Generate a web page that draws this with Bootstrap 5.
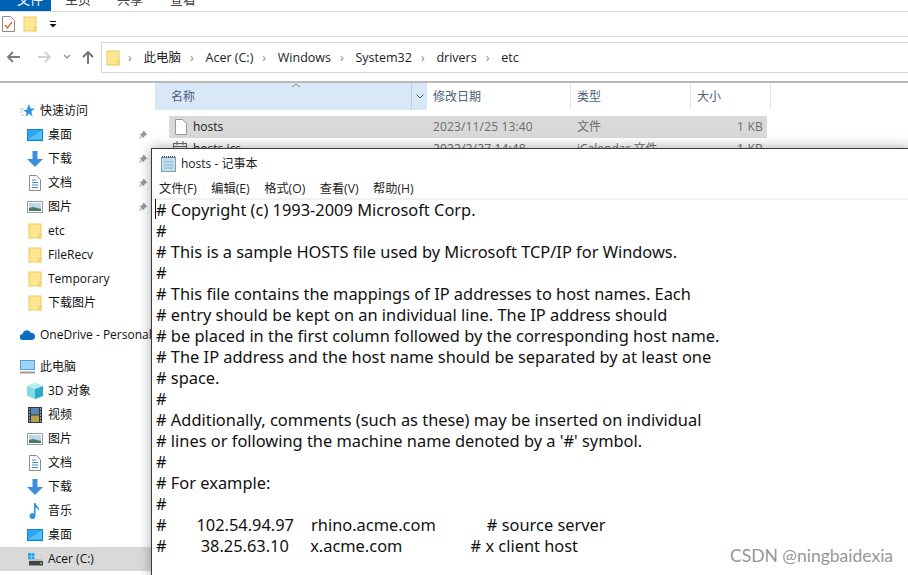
<!DOCTYPE html>
<html lang="zh"><head><meta charset="utf-8"><title>hosts - 记事本</title>
<link href="https://cdn.jsdelivr.net/npm/bootstrap@5.3.0/dist/css/bootstrap.min.css" rel="stylesheet">
<style>
html,body{margin:0;height:100%;overflow:hidden;background:#fff}
body{font:12px/16px "Open Sans","Noto Sans CJK SC",sans-serif;color:#1a1a1a}
.stage{width:908px;height:575px;overflow:hidden}
.ribbon{height:12px;border-bottom:1px solid #dcdcdc;overflow:hidden}
.ribtab{height:11px;overflow:hidden;color:#444;font-size:13px}
.ribtab span{display:block;margin-top:-9px}
.ribtab.on{width:51px;background:#0063b1;color:#fff;padding-left:17px}
.ribtab.t1{margin-left:14px;width:52px}.ribtab.t2{width:53px}.ribtab.t3{width:40px}
.qat{height:25px;border-bottom:1px solid #dcdcdc;padding-left:2px}
.qdrop{margin-left:12px}
.addr{height:46px;border-bottom:2px solid #b9b9b9}
.addrbox{margin-left:101px;height:31px;margin-top:5px;flex:1;border:1px solid #d9d9d9;border-right:0;color:#222;font-size:12.5px}
.crumb{margin-left:9.500px}.chev{color:#888;width:6px;margin-left:9px}
.chev.first{margin-left:8px}
.navic{position:relative}
.side{width:155px;flex:none;padding-top:16px;color:#111}
.srow{height:24px;padding-left:27px;gap:5px}
.srow.top{padding-left:20px;gap:5px}.srow.top svg{width:15px}
.srow .pin{margin-left:auto;margin-right:7px}
.srow.cur{background:#d9d9d9}
.gap8{margin-top:8px}
.hdr{height:27px;color:#4c607a}
.hname{width:272px;background:#d9e8f6;padding-left:16px;position:relative}
.hdrop{width:16px;border-left:1px solid #bfcfdf;margin-left:auto}
.hsort{left:136px;top:0}
.hcol{border-right:1px solid #e5e5e5;padding-left:6px;height:27px}
.wdate{width:144px}.wtype{width:120px}.wsize{width:80px}
.frows{margin:6px 0 0 14px;width:598px;color:#6d6d6d}
.frow{height:22px}
.frow.sel{background:#d9d9d9}
.cn{width:264px;padding-left:24px;color:#1a1a1a;position:relative}
.ficon{left:6px;top:0}.ficon2{left:4px;top:0}
.cd{width:144px;letter-spacing:.15px}.ct{width:117px}.cs{width:73px;text-align:right;padding-right:4px;letter-spacing:.2px}
.winpad{position:absolute;left:151px;top:148px;width:760px;height:430px;background:#fff;border:1px solid #3a3a3a;box-shadow:0 0 12px rgba(0,0,0,.35)}
.wintitle{height:30px;padding-left:9px;gap:5px;color:#222}
.winmenu{height:21px;padding:1px 0 0 7px;gap:14.500px;border-bottom:2px solid #f1f1f1;color:#222;font-size:12.2px}
.hostsText{margin:-1px 0 0 4px;font:16.4px/21px "Noto Sans","Open Sans",sans-serif;white-space:pre;color:#111;position:relative;overflow:visible}
.caret{position:absolute;left:-1px;top:0;width:1px;height:20px;background:#111}
.wmark{position:absolute;left:730px;top:546px;font:17.500px/20px Lato,sans-serif;color:#979797}
</style></head><body>
<svg width="0" height="0" class="position-absolute"><defs>
<symbol id="fld" viewBox="0 0 14 16"><rect x="1" y="1" width="12" height="14" fill="#ffe692" stroke="#eccb5b"/><rect x="11" y="11" width="2" height="4" fill="#ffe692" stroke="#e6c24f" stroke-width=".7"/></symbol>
<symbol id="desk" viewBox="0 0 16 12"><rect width="16" height="12" fill="#0a84d8"/><rect x="1" y="1" width="14" height="9.5" fill="#2ba6f5"/><path d="M1 10.5 15 1v9.5z" fill="#59bff9"/></symbol>
<symbol id="down" viewBox="0 0 16 16"><path d="M5.5 0h5v8H16l-8 8-8-8h5.500z" fill="#3e8ddd"/></symbol>
<symbol id="doc" viewBox="0 0 12 16"><path d="M.5.500h7l4 4v11H.5z" fill="#fff" stroke="#8b8b8b"/><path d="M3 5h4M3 7.500h6M3 10h6M3 12.500h6" stroke="#3f8fc7"/></symbol>
<symbol id="pic" viewBox="0 0 16 12"><rect x=".5" y=".5" width="15" height="11" fill="#fff" stroke="#9a9a9a"/><rect x="2" y="2" width="12" height="8" fill="#bcd7e8"/><path d="M2 10V7l4-1 8 2v2z" fill="#4c7a68"/></symbol>
<symbol id="pin" viewBox="0 0 10 10"><path d="M5.500.5 9.500 4.500 8 5 6 7 6 8.500 1.500 4 3 4 5 2z M3 6 .5 9.500 4 7z" fill="#9a9a9a"/></symbol>
<symbol id="cube" viewBox="0 0 16 16"><path d="M8 0l8 3v10l-8 3-8-3V3z" fill="#7fdbe4"/><path d="M8 6v10l8-3V3z" fill="#2fa8c4"/><path d="M8 0l8 3-8 3-8-3z" fill="#b6eef3"/></symbol>
<symbol id="vid" viewBox="0 0 14 16"><rect width="14" height="16" fill="#2c3a45"/><rect x="3" y="1" width="8" height="6.500" fill="#5b86b8"/><rect x="3" y="8.500" width="8" height="6.500" fill="#b9a24c"/><path d="M1 2h1M1 5h1M1 8h1M1 11h1M1 14h1M12 2h1M12 5h1M12 8h1M12 11h1M12 14h1" stroke="#fff"/></symbol>
<symbol id="note" viewBox="0 0 12 16"><path d="M5 0h1.500c.5 3 4.500 4 3.500 8-.5-2-2-3-3.500-3.500V13a3 3 0 1 1-1.500-2.500z" fill="#2f93e0"/></symbol>
</defs></svg>
<div class="stage">
 <div class="ribbon d-flex"><div class="ribtab on"><span>文件</span></div><div class="ribtab t1"><span>主页</span></div><div class="ribtab t2"><span>共享</span></div><div class="ribtab t3"><span>查看</span></div></div>
 <div class="qat d-flex align-items-center">
  <svg width="13" height="16" viewBox="0 0 13 16"><path d="M.5.500h8l4 4v11H.500z" fill="#fff" stroke="#8b8b8b"/><path d="M3 9l2.500 3L10 6" fill="none" stroke="#e8642a" stroke-width="1.300"/></svg>
  <svg width="14" height="16" class="ms-2"><use href="#fld"/></svg>
  <svg width="8" height="7" class="qdrop" viewBox="0 0 8 7"><path d="M1 .5h6" stroke="#111"/><path d="M.5 3h7L4 6.500z" fill="#111"/></svg>
 </div>
 <div class="addr d-flex navic">
  <svg width="100" height="46" viewBox="0 0 100 46" class="position-absolute top-0 start-0"><path d="M8 20h12M13 15l-5 5 5 5" fill="none" stroke="#7a7a7a" stroke-width="1.800"/><path d="M38 20h12M45 15l5 5-5 5" fill="none" stroke="#d0d0d0" stroke-width="1.800"/><path d="M64 18l3 3 3-3" fill="none" stroke="#8a8a8a" stroke-width="1.200"/><path d="M88 27V15M83 20l5-5 5 5" fill="none" stroke="#6e6e6e" stroke-width="1.800"/></svg>
  <div class="addrbox d-flex align-items-center">
   <svg width="14" height="16" class="ms-1"><use href="#fld"/></svg>
   <span class="chev first">›</span><span class="crumb">此电脑</span><span class="chev">›</span><span class="crumb">Acer (C:)</span><span class="chev">›</span><span class="crumb">Windows</span><span class="chev">›</span><span class="crumb">System32</span><span class="chev">›</span><span class="crumb">drivers</span><span class="chev">›</span><span class="crumb">etc</span>
  </div>
 </div>
 <div class="d-flex">
  <div class="side">
   <div class="srow top d-flex align-items-center"><svg width="15" height="14" viewBox="0 0 15 14"><path d="M9 0l1.500 4.500H15l-3.700 3 1.400 5L9 9.800 5.500 13l1-4.500L3 6h3.500z" fill="#2f93e0"/><path d="M0 5h4M0 8h3M1 11h3" stroke="#9ccdf2"/></svg><span>快速访问</span></div>
   <div class="srow d-flex align-items-center"><svg width="16" height="12"><use href="#desk"/></svg><span>桌面</span><svg class="pin" width="10" height="10"><use href="#pin"/></svg></div>
   <div class="srow d-flex align-items-center"><svg width="16" height="16"><use href="#down"/></svg><span>下载</span><svg class="pin" width="10" height="10"><use href="#pin"/></svg></div>
   <div class="srow d-flex align-items-center"><svg width="16" height="16" viewBox="-2 0 16 16"><use href="#doc" width="12" height="16"/></svg><span>文档</span><svg class="pin" width="10" height="10"><use href="#pin"/></svg></div>
   <div class="srow d-flex align-items-center"><svg width="16" height="12"><use href="#pic"/></svg><span>图片</span><svg class="pin" width="10" height="10"><use href="#pin"/></svg></div>
   <div class="srow d-flex align-items-center"><svg width="16" height="16" viewBox="-1 0 16 16"><use href="#fld" width="14" height="16"/></svg><span>etc</span></div>
   <div class="srow d-flex align-items-center"><svg width="16" height="16" viewBox="-1 0 16 16"><use href="#fld" width="14" height="16"/></svg><span>FileRecv</span></div>
   <div class="srow d-flex align-items-center"><svg width="16" height="16" viewBox="-1 0 16 16"><use href="#fld" width="14" height="16"/></svg><span>Temporary</span></div>
   <div class="srow d-flex align-items-center"><svg width="16" height="16" viewBox="-1 0 16 16"><use href="#fld" width="14" height="16"/></svg><span>下载图片</span></div>
   <div class="srow top d-flex align-items-center gap8 text-nowrap"><svg width="15" height="10" viewBox="0 0 15 10"><path d="M3 10a3 3 0 0 1-.5-6A4.500 4.500 0 0 1 11 3a3.500 3.500 0 0 1 1 7z" fill="#0f6cbd"/></svg><span>OneDrive - Personal</span></div>
   <div class="srow top d-flex align-items-center gap8"><svg width="15" height="14" viewBox="0 0 15 14"><rect width="15" height="10" fill="#5a9bd8"/><rect x="1" y="1" width="13" height="8" fill="#9ed4f8"/><path d="M0 12.500h15" stroke="#9a9a9a" stroke-width="2"/></svg><span>此电脑</span></div>
   <div class="srow d-flex align-items-center"><svg width="16" height="16"><use href="#cube"/></svg><span>3D 对象</span></div>
   <div class="srow d-flex align-items-center"><svg width="16" height="16" viewBox="-1 0 16 16"><use href="#vid" width="14" height="16"/></svg><span>视频</span></div>
   <div class="srow d-flex align-items-center"><svg width="16" height="12"><use href="#pic"/></svg><span>图片</span></div>
   <div class="srow d-flex align-items-center"><svg width="16" height="16" viewBox="-2 0 16 16"><use href="#doc" width="12" height="16"/></svg><span>文档</span></div>
   <div class="srow d-flex align-items-center"><svg width="16" height="16"><use href="#down"/></svg><span>下载</span></div>
   <div class="srow d-flex align-items-center"><svg width="16" height="16" viewBox="-2 0 16 16"><use href="#note" width="12" height="16"/></svg><span>音乐</span></div>
   <div class="srow d-flex align-items-center"><svg width="16" height="12"><use href="#desk"/></svg><span>桌面</span></div>
   <div class="srow cur d-flex align-items-center"><svg width="16" height="14" viewBox="0 0 16 14"><rect x="1" y="1" width="3" height="3" fill="#1ea7f2"/><rect x="4.500" y="1" width="3" height="3" fill="#1ea7f2"/><rect x="1" y="4.500" width="3" height="3" fill="#1ea7f2"/><rect x="4.500" y="4.500" width="3" height="3" fill="#1ea7f2"/><rect x="2" y="9" width="14" height="4.500" fill="#444"/><path d="M2 9l2-2h10l2 2z" fill="#bdbdbd"/><rect x="13" y="10.500" width="2" height="1.500" fill="#6fd04a"/></svg><span>Acer (C:)</span></div>
  </div>
  <div class="flex-fill">
   <div class="hdr d-flex">
    <div class="hname d-flex align-items-center"><span>名称</span><svg class="position-absolute hsort" width="10" height="5" viewBox="0 0 10 5"><path d="M1 4l4-3 4 3" fill="none" stroke="#8a8a8a"/></svg>
     <div class="hdrop d-flex align-items-center justify-content-center h-100"><svg width="8" height="5" viewBox="0 0 8 5"><path d="M.5.5 4 4 7.500.5" fill="none" stroke="#4c607a"/></svg></div></div>
    <div class="hcol wdate d-flex align-items-center">修改日期</div>
    <div class="hcol wtype d-flex align-items-center">类型</div>
    <div class="hcol wsize d-flex align-items-center">大小</div>
   </div>
   <div class="frows">
    <div class="frow sel d-flex align-items-center"><div class="cn"><svg class="position-absolute ficon" width="12" height="16" viewBox="0 0 12 16"><path d="M.5.500h7l4 4v11H.5z" fill="#fff" stroke="#9a9a9a"/></svg>hosts</div><div class="cd">2023/11/25 13:40</div><div class="ct">文件</div><div class="cs">1 KB</div></div>
    <div class="frow d-flex align-items-center"><div class="cn"><svg class="position-absolute ficon2" width="14" height="16" viewBox="0 0 14 16"><rect x=".5" y="2.500" width="13" height="13" fill="#fff" stroke="#666"/><path d="M.5 5.500h13M4 0v4M10 0v4" stroke="#666"/></svg>hosts.ics</div><div class="cd">2022/2/27 14:48</div><div class="ct">iCalendar 文件</div><div class="cs">1 KB</div></div>
   </div>
  </div>
 </div>
</div>
<div class="winpad">
 <div class="wintitle d-flex align-items-center"><svg width="15" height="16" viewBox="0 0 15 16"><rect x=".5" y="1.500" width="14" height="14" fill="#bfe0ee" stroke="#7f9fb0"/><path d="M1 1h13" stroke="#555" stroke-dasharray="1 1" stroke-width="2"/><path d="M3 6h9M3 9h9M3 12h9" stroke="#8fb6c9"/></svg><span>hosts - 记事本</span></div>
 <div class="winmenu d-flex align-items-center"><span>文件(F)</span><span>编辑(E)</span><span>格式(O)</span><span>查看(V)</span><span>帮助(H)</span></div>
 <div class="hostsText"><i class="caret"></i># Copyright (c) 1993-2009 Microsoft Corp.
#
# This is a sample HOSTS file used by Microsoft TCP/IP for Windows.
#
# This file contains the mappings of IP addresses to host names. Each
# entry should be kept on an individual line. The IP address should
# be placed in the first column followed by the corresponding host name.
# The IP address and the host name should be separated by at least one
# space.
#
# Additionally, comments (such as these) may be inserted on individual
# lines or following the machine name denoted by a '#' symbol.
#
# For example:
#
#       102.54.94.97    rhino.acme.com            # source server
#        38.25.63.10     x.acme.com                # x client host</div>
</div>
<div class="wmark">CSDN @ningbaidexia</div>
</body></html>
